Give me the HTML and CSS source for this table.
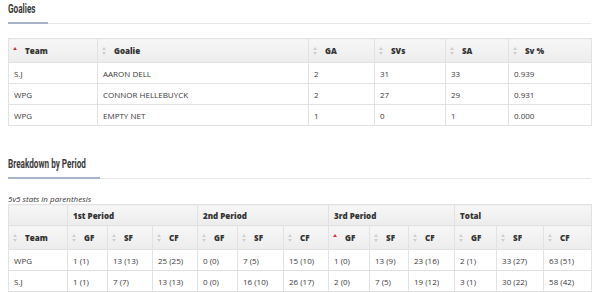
FILE: index.html
```html
<!DOCTYPE html>
<html>
<head>
<meta charset="utf-8">
<link rel="stylesheet" href="styles.css">
</head>
<body>
<div class="page">
  <div class="section-title accent-40"><h2 class="title-text">Goalies</h2></div>
  <table class="data goalies">
    <colgroup>
      <col class="g-team"><col class="g-goalie"><col class="g-ga"><col class="g-svs"><col class="g-sa"><col class="g-svp">
    </colgroup>
    <thead>
      <tr class="head-row">
        <th><span class="sort asc"></span>Team</th>
        <th><span class="sort"></span>Goalie</th>
        <th><span class="sort"></span>GA</th>
        <th><span class="sort"></span>SVs</th>
        <th><span class="sort"></span>SA</th>
        <th><span class="sort"></span>Sv %</th>
      </tr>
    </thead>
    <tbody>
      <tr><td>S.J</td><td>AARON DELL</td><td>2</td><td>31</td><td>33</td><td>0.939</td></tr>
      <tr><td>WPG</td><td>CONNOR HELLEBUYCK</td><td>2</td><td>27</td><td>29</td><td>0.931</td></tr>
      <tr><td>WPG</td><td>EMPTY NET</td><td>1</td><td>0</td><td>1</td><td>0.000</td></tr>
    </tbody>
  </table>

  <div class="section-title second accent-92"><h2 class="title-text">Breakdown by Period</h2></div>
  <p class="note">5v5 stats in parenthesis</p>
  <table class="data periods">
    <colgroup>
      <col class="p-team">
      <col class="p-c40"><col class="p-c45"><col class="p-c45">
      <col class="p-c40"><col class="p-c46"><col class="p-c45">
      <col class="p-c41"><col class="p-c39"><col class="p-c46">
      <col class="p-c42"><col class="p-c47"><col class="p-c48">
    </colgroup>
    <thead>
      <tr class="group-row">
        <th></th>
        <th colspan="3">1st Period</th>
        <th colspan="3">2nd Period</th>
        <th colspan="3">3rd Period</th>
        <th colspan="3">Total</th>
      </tr>
      <tr class="head-row">
        <th><span class="sort"></span>Team</th>
        <th><span class="sort"></span>GF</th>
        <th><span class="sort"></span>SF</th>
        <th><span class="sort"></span>CF</th>
        <th><span class="sort"></span>GF</th>
        <th><span class="sort"></span>SF</th>
        <th><span class="sort"></span>CF</th>
        <th><span class="sort asc"></span>GF</th>
        <th><span class="sort"></span>SF</th>
        <th><span class="sort"></span>CF</th>
        <th><span class="sort"></span>GF</th>
        <th><span class="sort"></span>SF</th>
        <th><span class="sort"></span>CF</th>
      </tr>
    </thead>
    <tbody>
      <tr><td>WPG</td><td>1 (1)</td><td>13 (13)</td><td>25 (25)</td><td>0 (0)</td><td>7 (5)</td><td>15 (10)</td><td>1 (0)</td><td>13 (9)</td><td>23 (16)</td><td>2 (1)</td><td>33 (27)</td><td>63 (51)</td></tr>
      <tr><td>S.J</td><td>1 (1)</td><td>7 (7)</td><td>13 (13)</td><td>0 (0)</td><td>16 (10)</td><td>26 (17)</td><td>2 (0)</td><td>7 (5)</td><td>19 (12)</td><td>3 (1)</td><td>30 (22)</td><td>58 (42)</td></tr>
    </tbody>
  </table>
</div>
</body>
</html>
```
FILE: styles.css
```css
html, body {
  margin: 0;
  padding: 0;
  background: #fff;
}
body {
  font-family: "Open Sans", "DejaVu Sans", sans-serif;
  color: #333;
  font-size: 8px;
}
.page {
  padding: 0 9px 0 8px;
}
.section-title {
  position: relative;
  border-bottom: 1px solid #e8e8e8;
  height: 23px;
}
.section-title::after {
  content: "";
  position: absolute;
  left: 0;
  bottom: -1px;
  height: 2px;
  background: #a7b4c8;
}
.accent-40::after { width: 40px; }
.accent-92::after { width: 92px; }
.section-title.second {
  margin-top: 29px;
}
.title-text {
  display: inline-block;
  margin: 0;
  padding: 0;
  font-family: Roboto, "DejaVu Sans", sans-serif;
  font-weight: bold;
  font-size: 13px;
  line-height: 17px;
  color: #3a3a3a;
  transform: scaleX(0.63);
  transform-origin: 0 0;
}
.data {
  width: 583px;
  table-layout: fixed;
  border-collapse: collapse;
  border: 1px solid #dedede;
}
.goalies {
  margin-top: 14px;
}
.data th, .data td {
  border: 1px solid #e2e2e2;
  padding: 0 0 0 5px;
  text-align: left;
  white-space: nowrap;
  overflow: hidden;
}
.data td {
  height: 20px;
  color: #3a3a3a;
}
.data th {
  font-weight: 800;
  color: #333;
  background: linear-gradient(#f7f7f7, #ececec);
}
.head-row th {
  height: 23px;
  padding-left: 4px;
}
.group-row th {
  height: 20px;
}
.sort {
  position: relative;
  display: inline-block;
  width: 5px;
  height: 8px;
  margin-right: 7px;
  vertical-align: -1px;
}
.sort::before, .sort::after {
  content: "";
  position: absolute;
  left: 0;
  border-left: 2.5px solid transparent;
  border-right: 2.5px solid transparent;
}
.sort::before {
  top: 0;
  border-bottom: 3px solid #cfcfcf;
}
.sort::after {
  top: 4.5px;
  border-top: 3px solid #cfcfcf;
}
.sort.asc::before {
  border-bottom-color: #d9353d;
}
.sort.asc::after {
  border-top-color: transparent;
}
.g-team { width: 89px; }
.g-goalie { width: 211px; }
.g-ga { width: 66px; }
.g-svs { width: 71px; }
.g-sa { width: 63px; }
.g-svp { width: 83px; }
.note {
  margin: 14px 0 0 0;
  font-style: italic;
  font-size: 8px;
  line-height: 11px;
  color: #333;
}
.p-team { width: 59px; }
.p-c39 { width: 39px; }
.p-c40 { width: 40px; }
.p-c41 { width: 41px; }
.p-c42 { width: 42px; }
.p-c45 { width: 45px; }
.p-c46 { width: 46px; }
.p-c47 { width: 47px; }
.p-c48 { width: 48px; }
```
